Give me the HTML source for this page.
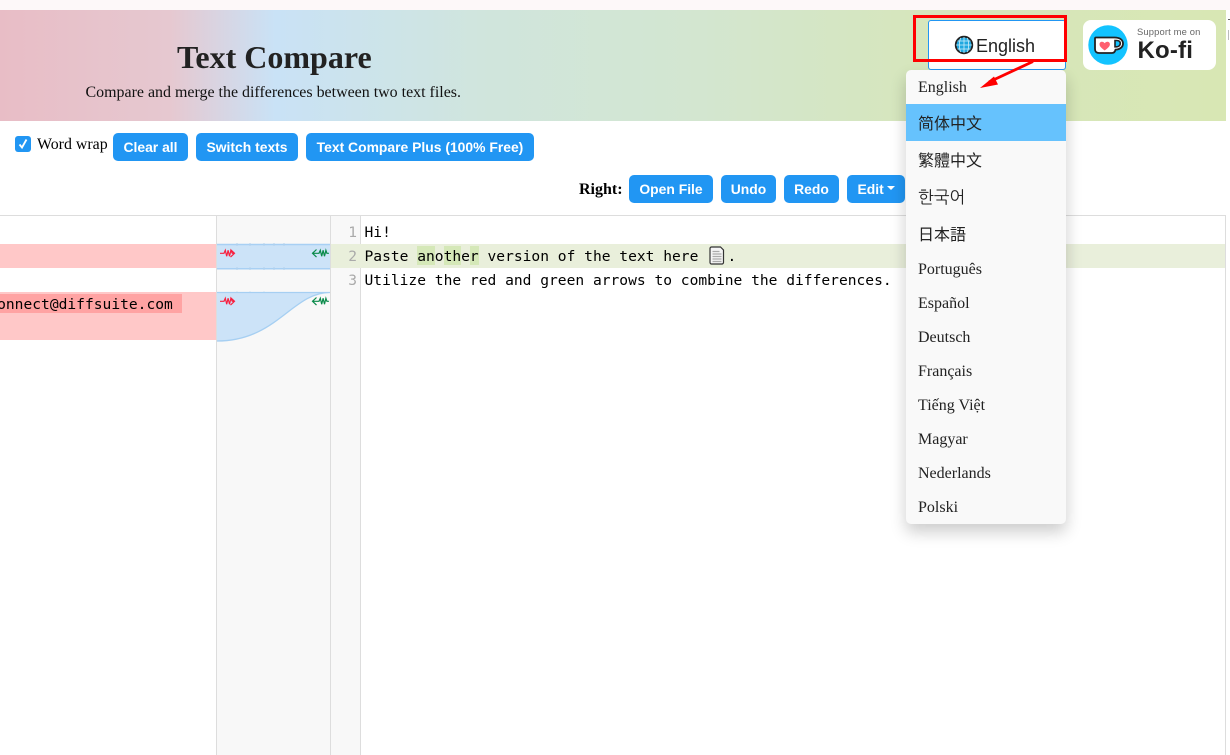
<!DOCTYPE html>
<html><head><meta charset="utf-8">
<style>
html,body{margin:0;padding:0;width:1230px;height:755px;overflow:hidden;background:#fff;font-family:"Liberation Serif",serif;color:#000}
.a{position:absolute;white-space:nowrap}
.hdr{left:0;top:9.5px;width:1226px;height:111.5px;background:linear-gradient(90deg,#e8bdc6 0,#e6c8d0 170px,#c9e2f6 275px,#d0e5dd 480px,#d3e6d0 700px,#d6e6bc 920px,#d8e7b4 1226px)}
.btn{position:absolute;height:28px;background:#2196f3;color:#fff;font:bold 13.9px/28px "Liberation Sans",sans-serif;border-radius:5px;text-align:center;white-space:nowrap}
.m{font-family:"DejaVu Sans Mono","Liberation Mono",monospace;font-size:14.6px;line-height:24px;color:#000;white-space:pre}
.num{font-family:"DejaVu Sans Mono",monospace;font-size:14.6px;line-height:24px;color:#aaa;text-align:right;width:26px;left:331px}
.dd{left:906px;top:70px;width:160px;height:454px;background:#f9f9f9;border-radius:5px;box-shadow:0 8px 16px rgba(0,0,0,.2)}
.it{position:absolute;left:12px;font-size:16px;color:#222;line-height:20px;white-space:nowrap}
.cjk{font-family:"Liberation Serif","Noto Sans CJK SC",sans-serif;font-size:16px}
</style></head><body>
<div class="a" style="left:0;top:0;width:1230px;height:9.5px;background:#fdf8f9"></div>
<div class="a hdr"></div>
<div class="a" style="left:177px;top:38px;font:bold 32px/38px 'Liberation Serif',serif;color:#222">Text Compare</div>
<div class="a" style="left:85.500px;top:83px;font-size:15.96px;line-height:20px;color:#111">Compare and merge the differences between two text files.</div>

<!-- language button -->
<div class="a" style="left:928px;top:20px;width:136px;height:48px;background:#fff;border:1px solid #2196f3;border-radius:3px"></div>
<svg class="a" style="left:954px;top:35px" width="20" height="20" viewBox="0 0 20 20"><circle cx="10" cy="10" r="8.300" fill="#1fa8e0" stroke="#222" stroke-width="1.800"/><path d="M2 10h16M10 2v16M3.500 6h13M3.500 14h13M6.500 3c-1.500 4.500-1.500 9.500 0 14M13.500 3c1.500 4.500 1.500 9.500 0 14" fill="none" stroke="#cdeefa" stroke-width=".8"/></svg>
<div class="a" style="left:976px;top:35px;font:18px/22px 'Liberation Sans',sans-serif;color:#222">English</div>

<!-- ko-fi -->
<div class="a" style="left:1083px;top:20px;width:133px;height:50px;background:#fff;border-radius:8px"></div>
<svg class="a" style="left:1088px;top:25px" width="40" height="40" viewBox="0 0 40 40"><circle cx="20" cy="20" r="19.700" fill="#13c3ff"/>
<path d="M8 12.500h18.500c5.500 0 8.500 2.500 8.500 6s-3 6-7.500 6.200c-.4 2-1.600 3.300-3.500 3.300H11c-2.500 0-4-1.500-4-4V13.500a1 1 0 0 1 1-1z" fill="#fff" stroke="#222" stroke-width="1.800"/>
<path d="M27 15.500h1.500c2.600 0 3.800 1.300 3.800 3s-1.500 3.300-3.800 3.300H27z" fill="#13c3ff" stroke="#222" stroke-width="1.600"/>
<path d="M16.700 25.500c-2.600-2-5.200-3.800-5.200-6.400 0-2.700 3.700-3.300 5.200-.8 1.500-2.500 5.200-1.900 5.200.8 0 2.600-2.600 4.400-5.200 6.400z" fill="#ff5f6f"/></svg>
<div class="a" style="left:1137px;top:26px;font:9.400px/12px 'Liberation Sans',sans-serif;color:#666;letter-spacing:.15px">Support me on</div>
<div class="a" style="left:1137.500px;top:37px;font:bold 24px/28px 'Liberation Sans',sans-serif;color:#222;letter-spacing:.2px">Ko-fi</div>

<!-- toolbar -->
<div class="a" style="left:15px;top:136px;width:16px;height:16px;background:#2196f3;border-radius:3px"></div>
<svg class="a" style="left:15px;top:136px" width="16" height="16" viewBox="0 0 16 16"><path d="M4.500 8.500l2.500 3L11.500 3.500" fill="none" stroke="#fff" stroke-width="1.800"/></svg>
<div class="a" style="left:37px;top:135px;font-size:15.9px;line-height:20px">Word wrap</div>
<div class="btn" style="left:113px;top:133px;width:75px">Clear all</div>
<div class="btn" style="left:196px;top:133px;width:102px">Switch texts</div>
<div class="btn" style="left:306px;top:133px;width:228px">Text Compare Plus (100% Free)</div>

<div class="a" style="left:579px;top:180px;font:bold 16px/20px 'Liberation Serif',serif">Right:</div>
<div class="btn" style="left:629px;top:175px;width:84px">Open File</div>
<div class="btn" style="left:721px;top:175px;width:55px">Undo</div>
<div class="btn" style="left:784px;top:175px;width:55px">Redo</div>
<div class="btn" style="left:847px;top:175px;width:58px;text-align:left;text-indent:10.500px">Edit</div>
<div class="a" style="left:887px;top:186px;width:0;height:0;border:4px solid transparent;border-top:4px solid #fff;border-bottom:0"></div>

<!-- editor frame -->
<div class="a" style="left:0;top:215px;width:1226px;height:1px;background:#ddd"></div>
<div class="a" style="left:1225px;top:215px;width:1px;height:540px;background:#ddd"></div>

<!-- left pane -->
<div class="a" style="left:0;top:244px;width:216px;height:24px;background:#ffc8c8"></div>
<div class="a" style="left:0;top:292px;width:216px;height:48px;background:#ffc8c8"></div>
<div class="a" style="left:0;top:294px;width:182px;height:19px;background:#ffa3a3"></div>
<div class="a m" style="left:-11.700px;top:293px">connect@diffsuite.com</div>

<!-- gap -->
<div class="a" style="left:216px;top:216px;width:115px;height:539px;background:#f8f8f8;border-left:1px solid #ddd;border-right:1px solid #ddd;box-sizing:border-box"></div>
<svg class="a" style="left:217px;top:216px" width="113" height="140" viewBox="0 0 113 140">
<path d="M0 28H113V53H0z" fill="#cce3f8"/>
<path d="M0 28.500H113M0 52.800H113" stroke="#a8d0f4" stroke-width="1.500" fill="none"/>
<path d="M20 27v3M33 27v3M47 27v3M57 27v3M67 27v3M20 51v3M33 51v3M47 51v3M57 51v3M67 51v3M20 75.500v3M33 75.500v3M47 75.500v3" stroke="#b4d2ec" stroke-width="1" fill="none"/>
<path d="M0 76.500H113C75 76.500 60 125 0 125z" fill="#cce3f8"/>
<path d="M0 76.500H113C75 76.500 60 125 0 125" stroke="#a6cff2" stroke-width="1.300" fill="none"/>
<g fill="none" stroke-width="1.200">
<path d="M3 37.300h4l1.300-3 1.400 6 1.400-6 1.400 6 1.400-6 1.400 3h1.500M13.500 33.500l4 3.800-4 3.800" stroke="#f8203f"/>
<path d="M3 85.300h4l1.300-3 1.400 6 1.400-6 1.400 6 1.400-6 1.400 3h1.500M13.500 81.500l4 3.800-4 3.800" stroke="#f8203f"/>
<path d="M96 37.300h6l1.300-3 1.400 6 1.400-6 1.400 6 1.400-6 1 3h2M99.500 33.500l-4 3.800 4 3.800" stroke="#0a8a4a"/>
<path d="M96 85.300h6l1.300-3 1.400 6 1.400-6 1.400 6 1.400-6 1 3h2M99.500 81.500l-4 3.800 4 3.800" stroke="#0a8a4a"/>
</g></svg>

<!-- right pane gutter -->
<div class="a" style="left:331px;top:216px;width:30px;height:539px;background:#f8f8f8;border-right:1px solid #ddd;box-sizing:border-box"></div>
<div class="a" style="left:331px;top:244px;width:894px;height:24px;background:#e9efdb"></div>
<div class="a num" style="top:221px">1</div>
<div class="a num" style="top:245px">2</div>
<div class="a num" style="top:269px">3</div>
<div class="a" style="left:417px;top:246px;width:18px;height:19px;background:#d5e8b8"></div>
<div class="a" style="left:444px;top:246px;width:17px;height:19px;background:#d5e8b8"></div>
<div class="a" style="left:470px;top:246px;width:9px;height:19px;background:#d5e8b8"></div>
<div class="a m" style="left:364.500px;top:221px">Hi!</div>
<div class="a m" style="left:364.500px;top:245px">Paste another version of the text here </div>
<svg class="a" style="left:709px;top:246px" width="16" height="19" viewBox="0 0 16 19"><path d="M1 2.500a1.500 1.500 0 0 1 1.500-1.500h9l3 3v12.500a1.500 1.500 0 0 1-1.500 1.500H2.500a1.500 1.500 0 0 1-1.500-1.500z" fill="#f4f4f4" stroke="#333" stroke-width="1.200"/><path d="M3.500 5.500h7M3.500 8h9M3.500 10.500h9M3.500 13h9M3.500 15.500h9" stroke="#aaa" stroke-width="1.200"/></svg>
<div class="a m" style="left:727.500px;top:245px">.</div>
<div class="a m" style="left:364.500px;top:269px">Utilize the red and green arrows to combine the differences.</div>

<!-- dropdown -->
<div class="a dd">
<div class="it" style="top:8px">English</div>
<div style="position:absolute;left:0;top:34px;width:160px;height:37px;background:#66c2fd"></div>
<div class="it cjk" style="top:45px">简体中文</div>
<div class="it cjk" style="top:82px;font-family:'Liberation Serif','Noto Sans CJK TC',sans-serif">繁體中文</div>
<div class="it cjk" style="top:118px;font-family:'Liberation Serif','NanumGothic',sans-serif;font-size:16.800px">한국어</div>
<div class="it cjk" style="top:156px;font-family:'Liberation Serif','Noto Sans CJK JP',sans-serif">日本語</div>
<div class="it" style="top:190px">Português</div>
<div class="it" style="top:224px">Español</div>
<div class="it" style="top:258px">Deutsch</div>
<div class="it" style="top:292px">Français</div>
<div class="it" style="top:326px">Tiếng Việt</div>
<div class="it" style="top:360px">Magyar</div>
<div class="it" style="top:394px">Nederlands</div>
<div class="it" style="top:428px">Polski</div>
</div>

<!-- annotation -->
<div class="a" style="left:913px;top:15px;width:154px;height:47px;box-sizing:border-box;border:3px solid #f00"></div>
<svg class="a" style="left:975px;top:58px" width="65" height="34" viewBox="0 0 65 34"><path d="M58 3.500L14 24" stroke="#f00" stroke-width="2.800" fill="none"/><path d="M5 30L19 18.500l4 8z" fill="#f00"/></svg>

<div class="a" style="left:1228px;top:19px;width:2px;height:1px;background:#666"></div>
<div class="a" style="left:1228px;top:30px;width:1px;height:10px;background:#bbb"></div>
</body></html>
